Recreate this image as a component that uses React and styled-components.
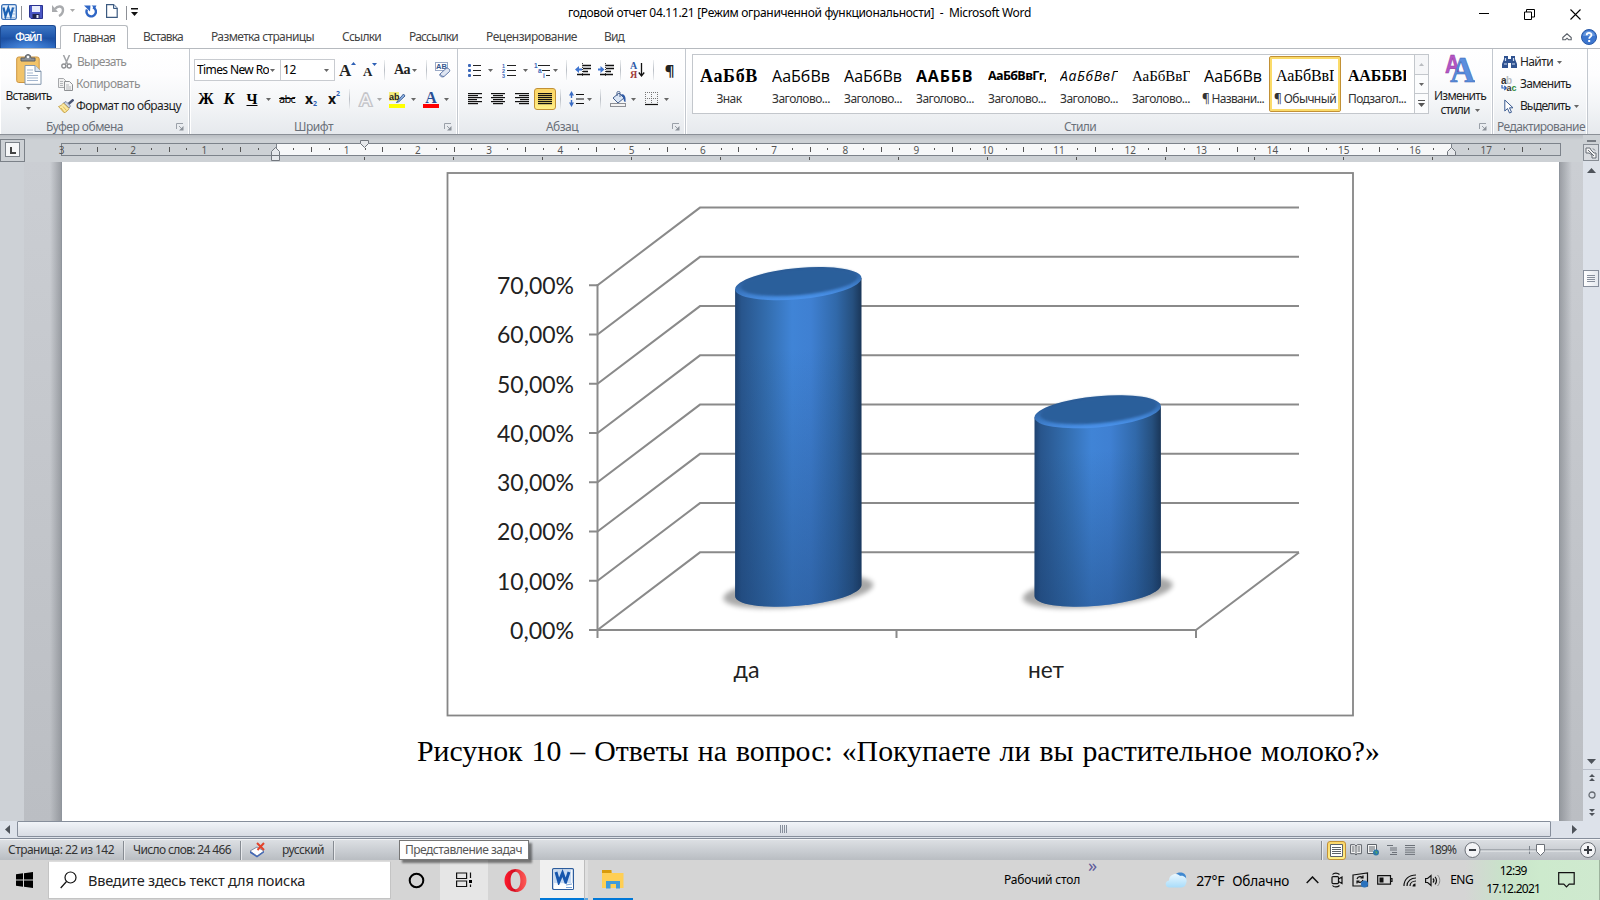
import React, { useLayoutEffect, useRef, useState } from "react";
import styled, { createGlobalStyle, css } from "styled-components";

const UI = `"Noto Sans", "Open Sans", sans-serif`;

const Global = createGlobalStyle`
  *, *::before, *::after { box-sizing: border-box; }
  html, body { margin: 0; padding: 0; overflow: hidden; }
  body { font: 12px/16px ${UI}; color: #1e1e1e; background: #fff; }
  svg { display: block; flex: none; }
`;

/* Text that adjusts its tracking (or its word gaps) to fill a given width. */
const FitBox = styled.span`
  display: inline-block;
  flex: none;
  white-space: pre;
  width: ${(p) => p.$w}px;
  font-size: ${(p) => p.$size || 12}px;
  font-family: ${(p) => p.$font || UI};
  font-weight: ${(p) => p.$weight || 400};
  font-style: ${(p) => (p.$italic ? "italic" : "normal")};
  color: ${(p) => p.$color || "inherit"};
  overflow: ${(p) => (p.$clip ? "hidden" : "visible")};
`;

function Fit({ w, children, words, clip, ...rest }) {
  const ref = useRef(null);
  const [gap, setGap] = useState(0);
  useLayoutEffect(() => {
    const natural = ref.current.getBoundingClientRect().width;
    const text = String(children);
    const slots = words ? text.split(" ").length - 1 : text.length;
    if (slots > 0 && natural > 0) setGap((w - natural) / slots);
  }, [w, children, words]);
  return (
    <FitBox $w={w} $clip={clip} {...rest}>
      <span ref={ref} style={words ? { wordSpacing: gap } : { letterSpacing: gap }}>
        {children}
      </span>
    </FitBox>
  );
}

/* ---------- frame ---------- */
const Window = styled.div`
  width: 1600px;
  height: 900px;
  display: flex;
  flex-direction: column;
  background: #fff;
  overflow: hidden;
`;

const Slot = styled.div`
  flex: none;
  width: ${(p) => p.$w}px;
  margin-left: ${(p) => p.$ml || 0}px;
  margin-top: ${(p) => p.$mt || 0}px;
  display: flex;
  align-items: center;
  justify-content: ${(p) => (p.$start ? "flex-start" : "center")};
`;

/* ---------- title bar ---------- */
const TitleBar = styled.div`
  height: 25px;
  flex: none;
  display: flex;
  align-items: center;
  padding-left: 1px;
`;
const TitleSep = styled.div`
  width: 1px;
  height: 14px;
  background: #8d9096;
  margin-left: ${(p) => p.$ml}px;
`;
const Title = styled.div`
  margin: 1px 0 0 430px;
  color: #000;
`;
const Caption = styled.div`
  display: flex;
  margin-left: 448px;
  margin-top: 3px;
  gap: 35px;
`;

/* ---------- tabs ---------- */
const Tabs = styled.div`
  height: 24px;
  flex: none;
  display: flex;
  border-bottom: 1px solid #b6babf;
  color: #444;
`;
const FileTab = styled.div`
  width: 56px;
  height: 23px;
  display: flex;
  align-items: center;
  justify-content: center;
  color: #fff;
  border: 1px solid #1c4a93;
  border-bottom: 0;
  border-radius: 3px 3px 0 0;
  background: radial-gradient(ellipse 30px 12px at 50% 100%, #4a8be0, rgba(74, 139, 224, 0)),
    linear-gradient(#3d76c4, #1f57ab 50%, #1c50a3 55%, #2a66bd);
`;
const ActiveTab = styled.div`
  width: 68px;
  height: 24px;
  margin-left: 4px;
  padding-left: 12px;
  display: flex;
  align-items: center;
  border: 1px solid #b6babf;
  border-bottom: 0;
  border-radius: 3px 3px 0 0;
  background: #fff;
`;
const Tab = styled.div`
  height: 24px;
  display: flex;
  align-items: center;
  margin-left: ${(p) => p.$ml}px;
`;
const TabsRight = styled.div`
  display: flex;
  align-items: center;
  margin-left: auto;
  gap: 9px;
  padding-right: 3px;
`;

/* ---------- ribbon ---------- */
const Ribbon = styled.div`
  height: 86px;
  flex: none;
  display: flex;
  background: linear-gradient(#fff 0, #fdfdfe 30%, #f3f5f7 65%, #e6e9ed 100%);
  border-bottom: 1px solid #8b9097;
`;
const Group = styled.div`
  width: ${(p) => p.$w}px;
  flex: none;
  display: flex;
  flex-direction: column;
  border-right: 1px solid #c3c8cf;
  box-shadow: inset -1px 0 #fff, inset 1px 0 #fff;
`;
const GroupBody = styled.div`
  height: 68px;
  display: flex;
  flex-direction: ${(p) => (p.$col ? "column" : "row")};
`;
const GroupFoot = styled.div`
  height: 17px;
  padding: 2px 0 0 ${(p) => p.$pl}px;
  display: flex;
  align-items: center;
  color: #6a7079;
`;
const LauncherBox = styled.div`
  margin-left: auto;
  margin-right: 5px;
`;
const ToolRow = styled.div`
  display: flex;
  align-items: center;
  height: ${(p) => p.$h}px;
  margin-top: ${(p) => p.$mt || 0}px;
  padding-left: ${(p) => p.$pl || 0}px;
`;
const BigButton = styled.div`
  width: ${(p) => p.$w}px;
  padding-top: 5px;
  display: flex;
  flex-direction: column;
  align-items: center;
  line-height: 14px;
`;
const Stack = styled.div`
  display: flex;
  flex-direction: column;
  padding-top: 2px;
  margin-left: ${(p) => p.$ml}px;
`;
const Command = styled.div`
  height: 22px;
  display: flex;
  align-items: center;
  gap: ${(p) => p.$gap || 3}px;
  color: ${(p) => (p.$off ? "#8d8d8d" : "#1e1e1e")};
`;
const Combo = styled.div`
  width: ${(p) => p.$w}px;
  height: 22px;
  flex: none;
  display: flex;
  align-items: center;
  justify-content: space-between;
  border: 1px solid #c8cbd0;
  margin-right: -1px;
  padding: 0 5px 0 2px;
  background: #fff;
  color: #000;
`;
const Sep = styled.div`
  width: 1px;
  height: 20px;
  flex: none;
  margin-left: ${(p) => p.$ml}px;
  background: linear-gradient(#eef0f2, #b9bec5, #eef0f2);
`;
const Glyph = styled.span`
  font-family: ${(p) => (p.$sans ? UI : `"Liberation Serif", serif`)};
  font-size: ${(p) => p.$size || 16}px;
  font-weight: ${(p) => (p.$light ? 400 : 700)};
  font-style: ${(p) => (p.$italic ? "italic" : "normal")};
  text-decoration: ${(p) => p.$deco || "none"};
  line-height: 18px;
  color: ${(p) => p.$color || "#222"};
  letter-spacing: ${(p) => p.$ls || 0}px;
`;
const Sub = styled.span`
  font: 700 7px/8px ${UI};
  color: #2d5fb5;
  align-self: ${(p) => (p.$up ? "flex-start" : "flex-end")};
`;
const Pressed = styled.div`
  width: 22px;
  height: 22px;
  flex: none;
  margin-left: ${(p) => p.$ml}px;
  display: flex;
  align-items: center;
  justify-content: center;
  border: 1px solid #c29136;
  border-radius: 3px;
  background: linear-gradient(#fbd669, #fcdd6c 50%, #fff08a);
`;

/* ---------- style gallery ---------- */
const Gallery = styled.div`
  width: 737px;
  height: 60px;
  margin: 5px 0 0 6px;
  flex: none;
  display: flex;
  border: 1px solid #c3c7cc;
  background: #fff;
`;
const StyleCell = styled.div`
  width: 72px;
  height: 56px;
  margin-top: 1px;
  flex: none;
  display: flex;
  flex-direction: column;
  align-items: center;
  padding-top: 9px;
  color: #333;
  ${(p) =>
    p.$on &&
    css`
      border: 1px solid #c29136;
      border-radius: 2px;
      box-shadow: inset 0 0 0 2px #fbdb69;
      padding-top: 8px;
    `}
`;
const Preview = styled.div`
  height: 22px;
  margin-bottom: 4px;
  line-height: 22px;
  width: 58px;
  flex: none;
  overflow: hidden;
  color: #000;
`;
const GalleryScroll = styled.div`
  width: 14px;
  margin-left: auto;
  display: flex;
  flex-direction: column;
`;
const ScrollCell = styled.div`
  flex: 1;
  display: flex;
  align-items: center;
  justify-content: center;
  border-left: 1px solid #c3c7cc;
  border-bottom: ${(p) => (p.$last ? 0 : 1)}px solid #c3c7cc;
  background: ${(p) => (p.$off ? "#f5f6f8" : "#fbfcfd")};
`;

/* ---------- document area ---------- */
const Work = styled.div`
  height: 686px;
  flex: none;
  display: flex;
`;
const WorkMain = styled.div`
  width: 1583px;
  display: flex;
  flex-direction: column;
`;
const RulerBar = styled.div`
  height: 27px;
  flex: none;
  background: linear-gradient(#b9bdc2 0, #cdd1d5 5px, #cdd1d5);
`;
const Canvas = styled.div`
  height: 659px;
  display: flex;
`;
const LeftEdge = styled.div`
  width: 24px;
  background: #cdd1d6;
`;
const Backdrop = styled.div`
  width: ${(p) => p.$w}px;
  background: ${(p) =>
      p.$left
        ? "linear-gradient(90deg, rgba(130,134,140,0) 26px, rgba(130,134,140,.65) 100%)"
        : "linear-gradient(270deg, rgba(130,134,140,0) 11px, rgba(130,134,140,.65) 100%)"},
    linear-gradient(#cbced3, #bbbec3);
`;
const Page = styled.div`
  width: 1499px;
  background: #fff;
  border-left: 1px solid #8f959d;
  border-right: 1px solid #8f959d;
  padding: 10px 0 0 355px;
`;
const ChartFrame = styled.div`
  width: 908px;
  margin-left: 29px;
`;
const FigureCaption = styled.div`
  margin-top: 16px;
  line-height: 36px;
  color: #000;
`;

const VScroll = styled.div`
  width: 17px;
  background: #dde2ea;
  display: flex;
  flex-direction: column;
  align-items: flex-start;
`;
const SplitBar = styled.div`
  width: 17px;
  height: 9px;
  background: #cdd1d5;
  padding: 5px 4px 0;
  flex: none;
  &::after {
    content: "";
    display: block;
    height: 2px;
    background: #777c83;
  }
`;
const RulerToggle = styled.div`
  width: 16px;
  height: 17px;
  flex: none;
  border: 1px solid #868c94;
  background: #d9dce0;
  display: flex;
  align-items: center;
  justify-content: center;
`;
const VThumb = styled.div`
  width: 16px;
  height: 17px;
  flex: none;
  margin-top: 97px;
  border: 1px solid #868e9b;
  background: linear-gradient(90deg, #fff, #e4e8ee);
  display: flex;
  align-items: center;
  justify-content: center;
`;
const NavBlock = styled.div`
  width: 17px;
  margin-top: 5px;
  padding-top: 4px;
  border-top: 1px solid #b8bec9;
  display: flex;
  flex-direction: column;
  align-items: center;
  gap: 10px;
`;

const HScroll = styled.div`
  height: 18px;
  flex: none;
  display: flex;
  align-items: flex-start;
  background: #dde2ea;
  border-bottom: 1px solid #868e9b;
`;
const HArrow = styled.div`
  width: ${(p) => p.$w}px;
  height: 17px;
  display: flex;
  align-items: center;
  justify-content: ${(p) => (p.$end ? "flex-end" : "flex-start")};
  padding: ${(p) => (p.$end ? "0 23px 0 0" : "0 0 0 5px")};
`;
const HThumb = styled.div`
  width: 1534px;
  height: 16px;
  flex: none;
  display: flex;
  align-items: center;
  justify-content: center;
  border: 1px solid #868e9b;
  border-radius: 1px;
  background: linear-gradient(#f1f4f8, #d8dce3);
`;

/* ---------- status bar ---------- */
const StatusBar = styled.div`
  height: 21px;
  flex: none;
  display: flex;
  align-items: center;
  border-top: 1px solid #f2f3f5;
  background: linear-gradient(#dcdfe3, #c7cbd0 60%, #b9bdc2);
  color: #333;
  padding-left: 8px;
`;
const StatusSep = styled.div`
  width: 2px;
  height: 19px;
  flex: none;
  margin-left: ${(p) => p.$ml}px;
  background: #868b92;
  border-right: 1px solid #e8eaed;
`;
const ViewOn = styled.div`
  width: 19px;
  height: 19px;
  margin-left: 4px;
  flex: none;
  border: 1px solid #c29136;
  border-radius: 3px;
  background: linear-gradient(#fbd669, #fff08a);
  display: flex;
  align-items: center;
  justify-content: center;
`;
const Tooltip = styled.div`
  position: absolute;
  left: 399px;
  top: 840px;
  width: 130px;
  height: 20px;
  padding: 1px 0 0 5px;
  border: 1px solid #767676;
  background: #fff;
  color: #575757;
  box-shadow: 3px 3px 2px rgba(0, 0, 0, 0.45);
`;

/* ---------- taskbar ---------- */
const Taskbar = styled.div`
  height: 40px;
  flex: none;
  display: flex;
  align-items: stretch;
  background: linear-gradient(90deg, #d5d5d5 0, #d5d5d5 1465px, #c8e3c9 1505px, #cdeacd 1540px, #cfe9cf 100%);
  color: #000;
`;
const TaskTile = styled.div`
  width: ${(p) => p.$w}px;
  margin-left: ${(p) => p.$ml || 0}px;
  padding-left: ${(p) => p.$pl || 0}px;
  flex: none;
  display: flex;
  align-items: center;
  justify-content: center;
  background: ${(p) => p.$bg || "transparent"};
  border-bottom: ${(p) => (p.$open ? "2px solid #0078d7" : "0")};
`;
const TileEdge = styled.div`
  width: 4px;
  flex: none;
  background: #dfdfdf;
  border-left: 1px solid #bdbdbd;
  border-bottom: 2px solid #5aa5e0;
`;
const Search = styled.div`
  width: 343px;
  height: 38px;
  margin: 1px 0 0;
  flex: none;
  display: flex;
  align-items: center;
  padding-left: 11px;
  gap: 11px;
  border: 1px solid #c4c4c4;
  border-top-color: #ddd;
  background: #fff;
  color: #222;
`;
const Toolbar = styled.div`
  display: flex;
  margin-left: 371px;
  align-items: center;
`;
const MoreMark = styled.span`
  align-self: flex-start;
  margin: -4px 0 0 8px;
  font: 18px/18px ${UI};
  color: #5d5a9a;
`;
const Tray = styled.div`
  display: flex;
  align-items: center;
`;
const Clock = styled.div`
  width: 60px;
  margin-left: 10px;
  display: flex;
  flex-direction: column;
  align-items: center;
  line-height: 18px;
`;
const PeekLine = styled.div`
  width: 1px;
  margin-left: 24px;
  background: #9db39d;
`;

/* ---------- icons ---------- */
const Down = ({ c = "#666", w = 7 }) => (
  <svg width={w} height={(w + 1) / 2} viewBox="0 0 8 4" preserveAspectRatio="none"><path d="M0 0h8L4 4z" fill={c} /></svg>
);
const Up = ({ c = "#666", w = 7 }) => (
  <svg width={w} height={(w + 1) / 2} viewBox="0 0 8 4" preserveAspectRatio="none"><path d="M0 4h8L4 0z" fill={c} /></svg>
);
const Launcher = () => (
  <LauncherBox>
    <svg width="8" height="8" viewBox="0 0 8 8">
      <path d="M.5 6V.5H7M3 3l3 3" stroke="#9aa0a8" fill="none" />
      <path d="M7.500 3v4.500H3z" fill="#8b9199" />
    </svg>
  </LauncherBox>
);
const WordLogo = () => (
  <svg width="16" height="16" viewBox="0 0 16 16">
    <rect x=".7" y=".7" width="14.600" height="14.600" rx="1.500" fill="#eaf2fb" stroke="#3a6fb5" strokeWidth="1.300" />
    <path d="M12 4h2.500M12 7h2.500M12 10h2.500M3 13.500h11" stroke="#9dbbe0" />
    <path d="M2.500 3.500l2 8.500 2.800-8L9.800 12l2.200-8.500" fill="none" stroke="#1d62b4" strokeWidth="2.200" />
  </svg>
);
const Save = () => (
  <svg width="14" height="14" viewBox="0 0 14 14">
    <path d="M.5.5h13v13H2L.5 12z" fill="#4a57c4" stroke="#2a3390" />
    <rect x="3" y="1" width="8" height="6" fill="#e9edfb" />
    <rect x="3.500" y="9" width="7" height="4.500" fill="#20264f" />
    <rect x="7.500" y="10" width="2" height="3" fill="#e9edfb" />
  </svg>
);
const Undo = () => (
  <svg width="13" height="13" viewBox="0 0 13 13">
    <path d="M3 5c3-4 8-3 8 1 0 3-2 5-4 6" fill="none" stroke="#a9abae" strokeWidth="2.400" />
    <path d="M0 1v7h6z" fill="#a9abae" />
  </svg>
);
const Redo = () => (
  <svg width="13" height="13" viewBox="0 0 13 13">
    <path d="M3 4.500A4.700 4.700 0 1 0 9 2.300" fill="none" stroke="#2f66c5" strokeWidth="2.400" />
    <path d="M0 .5h6.500L6 6.500z" fill="#2f66c5" />
    <path d="M7.500 .5h5L11 3.500z" fill="#2f66c5" />
  </svg>
);
const NewDoc = () => (
  <svg width="12" height="14" viewBox="0 0 12 14">
    <path d="M.6.6h7l3.600 3.600v9.200H.6z" fill="#fff" stroke="#3c5a80" strokeWidth="1.200" />
    <path d="M7.500.5v4h4" fill="#c9d6e6" stroke="#3c5a80" />
  </svg>
);
const Customize = () => (
  <svg width="7" height="8" viewBox="0 0 7 8"><path d="M0 0h7v1.500H0zM0 4h7L3.500 8z" fill="#111" /></svg>
);
const WinMin = () => <svg width="10" height="10"><path d="M0 4.500h10" stroke="#000" /></svg>;
const WinRestore = () => (
  <svg width="11" height="11"><path d="M.5 3h7v7.500h-7zM2.500 3V.5h8V8H7.500" fill="none" stroke="#000" /></svg>
);
const WinClose = () => <svg width="11" height="11"><path d="M.5.5l10 10M10.500.5l-10 10" stroke="#000" strokeWidth="1.100" /></svg>;
const RibbonMin = () => (
  <svg width="10" height="8" viewBox="0 0 10 8">
    <path d="M.8 4.500L5 .8l4.200 3.700v2.200H6.500L5 5.200 3.500 6.700H.8z" fill="#fff" stroke="#5a6068" strokeWidth="1.100" />
  </svg>
);
const Help = () => (
  <svg width="16" height="16" viewBox="0 0 16 16">
    <circle cx="8" cy="8" r="7.500" fill="#3c76cf" stroke="#2a5aa8" />
    <path d="M2 7a6 5 0 0 1 12 0z" fill="#7fabe6" opacity=".6" />
    <path d="M5.700 6.300c0-3.200 4.800-3 4.800-.3 0 1.900-2.300 1.700-2.300 3.700" fill="none" stroke="#fff" strokeWidth="1.800" />
    <rect x="7.200" y="11" width="2" height="2" fill="#fff" />
  </svg>
);
const Paste = () => (
  <svg width="26" height="31" viewBox="0 0 26 31">
    <rect x=".7" y="3" width="22.500" height="25.500" rx="2" fill="#f2c369" stroke="#cd9540" />
    <path d="M5 7V4h4a3 3.500 0 0 1 6 0h4v3z" fill="#8b9096" stroke="#5c6066" />
    <circle cx="12" cy="3" r="1.200" fill="#fff" />
    <path d="M9 11.500h10l6 6v12.800H9z" fill="#fff" stroke="#8296ad" />
    <path d="M19 11.500v6h6" fill="#dce6f2" stroke="#8296ad" />
    <path d="M11 16h6M11 19h6M11 21.500h11M11 24h11M11 26.500h11" stroke="#a5b7cf" />
  </svg>
);
const Cut = () => (
  <svg width="11" height="14" viewBox="0 0 11 14">
    <path d="M2.500 0l4 9M8.500 0l-4 9" stroke="#a0a2a5" strokeWidth="1.500" />
    <circle cx="2.800" cy="11" r="2" fill="none" stroke="#8e9093" strokeWidth="1.400" />
    <circle cx="8.200" cy="11" r="2" fill="none" stroke="#8e9093" strokeWidth="1.400" />
  </svg>
);
const Copy = () => (
  <svg width="15" height="13" viewBox="0 0 15 13">
    <path d="M.5.5h5l2 2v7h-7z" fill="#f0f0f0" stroke="#a6a8ab" />
    <path d="M6.500 3.500h5l3 3v6h-8z" fill="#f6f6f6" stroke="#8e9093" />
    <path d="M2 3.500h3M2 5.500h3M2 7.500h3M8 7h3M8 9h5M8 11h5" stroke="#b5b7ba" />
  </svg>
);
const Brush = () => (
  <svg width="16" height="14" viewBox="0 0 16 14">
    <path d="M15.500.5L10.500 5" stroke="#4b5674" strokeWidth="2.400" />
    <path d="M8 2.500l4.500 4.500-1.500 2-5.500-5z" fill="#c8d2e4" stroke="#6a7592" strokeWidth=".8" />
    <path d="M5.500 4l5.500 5.500c-1 2-3 4-5 4.200L.5 7.500C2.500 7 4 6 5.500 4z" fill="#fbe9a0" stroke="#c09a3c" strokeWidth=".8" />
    <path d="M3 9l3 4M5 7.500l3.500 4" stroke="#dbb454" />
  </svg>
);
const MarkBox = styled.div`
  align-self: flex-start;
`;
const GrowMark = ({ up }) => (
  <MarkBox>
    <svg width="5" height="3" viewBox="0 0 5 3">
      <path d={up ? "M0 3h5L2.500 0z" : "M0 0h5L2.500 3z"} fill="#2d5fb5" />
    </svg>
  </MarkBox>
);
const ClearFmt = () => (
  <svg width="17" height="16" viewBox="0 0 17 16">
    <rect x=".5" y=".5" width="12" height="8" fill="#fff" stroke="#9aa9c6" />
    <text x="1" y="7.300" fontFamily="Liberation Sans" fontSize="7.500" fontWeight="700" fill="#35588f">AB</text>
    <path d="M5 12l6-5.500c2-1 4.500 1 3.500 3L9 14.500c-2 1.200-5-.5-4-2.500z" fill="#dfe6f3" stroke="#5f78a8" />
    <path d="M5 12c.5 1 2 2.500 4 2.500" stroke="#5f78a8" fill="none" />
  </svg>
);
const OutlineA = () => (
  <svg width="16" height="15" viewBox="0 0 16 15">
    <text x="2" y="13.500" fontFamily="Liberation Sans" fontSize="17" fontWeight="400" fill="#fff" stroke="#c4c5c9" strokeWidth="3">A</text>
    <text x="2" y="13.500" fontFamily="Liberation Sans" fontSize="17" fontWeight="400" fill="#f4f4f6">A</text>
  </svg>
);
const Marker = () => (
  <svg width="17" height="16" viewBox="0 0 17 16">
    <rect x="0" y="0" width="10" height="9" fill="#f4ee7c" />
    <text x="0" y="7.500" fontFamily="Liberation Sans" fontSize="9" fontWeight="700" fill="#222">ab</text>
    <path d="M14.500 2L9 8.500l-1.500 2 2.300-.7L16 4z" fill="#8fb1e3" stroke="#34588f" strokeWidth=".9" />
    <rect y="12" width="16" height="4" fill="#ff0" />
  </svg>
);
const FontColor = () => (
  <svg width="16" height="16" viewBox="0 0 16 16">
    <text x="2.200" y="10.500" fontFamily="Liberation Serif" fontSize="16" fontWeight="700" fill="#2a4f96">A</text>
    <rect y="12" width="16" height="4" fill="#f00" />
  </svg>
);
const Bullets = () => (
  <svg width="14" height="14" viewBox="0 0 14 14">
    <path d="M5 2.500h8M5 7.500h8M5 12.500h8" stroke="#222" />
    {[2, 7, 12].map((y) => <rect key={y} x="0" y={y - 1} width="3" height="3" rx="1" fill="#3a66b8" />)}
  </svg>
);
const Numbers = () => (
  <svg width="15" height="15" viewBox="0 0 15 15">
    <path d="M5 2.500h9M5 7.500h9M5 12.500h9" stroke="#222" />
    {[1, 2, 3].map((n) => <text key={n} x="0" y={n * 5} fontFamily="Liberation Sans" fontSize="5.500" fontWeight="700" fill="#3a66b8">{n}</text>)}
  </svg>
);
const Multi = () => (
  <svg width="17" height="15" viewBox="0 0 17 15">
    <path d="M4 2.500h12M8 7.500h8M12 12.500h4" stroke="#222" />
    <g fontFamily="Liberation Sans" fontSize="6.500" fontWeight="700" fill="#3a66b8">
      <text x="0" y="5">1</text><text x="4" y="10">a</text><text x="9" y="15">i</text>
    </g>
  </svg>
);
const Indent = ({ out }) => (
  <svg width="16" height="14" viewBox="0 0 16 14">
    <path d="M7 2.500h9M8 5.500h8M8 8.500h5M2 11.500h13" stroke="#111" strokeWidth="1.600" />
    <path d="M7.500 0v14" stroke="#444" strokeDasharray="1 1" />
    <path d={out ? "M0 6.500l4-3.500v2.500h3v2H4V10z" : "M6.500 6.500L2.500 3v2.500H0v2h2.500V10z"} fill="#3f75d0" />
  </svg>
);
const Sort = () => (
  <svg width="15" height="16" viewBox="0 0 15 16">
    <g fontFamily="Liberation Serif" fontSize="10" fontWeight="700">
      <text x="0" y="7" fill="#2f5ba8">А</text><text x="0" y="15.500" fill="#a03c3c">Я</text>
    </g>
    <path d="M11.500 1v12M8.800 10.500l2.700 3.500 2.700-3.500" fill="none" stroke="#111" strokeWidth="1.300" />
  </svg>
);
const Lines = ({ rows, c = "#111", w = 14 }) => (
  <svg width={w} height="12" viewBox={`0 0 ${w} 12`}>
    {rows.map(([x, len], i) => <rect key={i} x={x} y={i * 2} width={len} height="1.200" fill={c} />)}
  </svg>
);
const LineSpacing = () => (
  <svg width="16" height="16" viewBox="0 0 16 16">
    <path d="M7 3.500h8M7 8h8M7 12.500h8" stroke="#111" strokeWidth="1.200" />
    <path d="M0 4.500L2.500 0 5 4.500H3.200V7H1.800V4.500zM0 11.500L2.500 16 5 11.500H3.200V9H1.800v2.500z" fill="#3a6cc4" />
  </svg>
);
const Bucket = () => (
  <svg width="17" height="16" viewBox="0 0 17 16">
    <path d="M3 7l6-5 5 5-6 5z" fill="#dbe6f5" stroke="#46618f" />
    <path d="M7 5V1.500c0-1.500 3-1.500 3 0V6" fill="none" stroke="#46618f" />
    <path d="M11 3c4 0 5 3 4.500 8-1.500 0-2-2-2-4z" fill="#2f5ba8" />
    <rect x=".5" y="12.500" width="15" height="3" fill="#f2f2f2" stroke="#8d9096" />
  </svg>
);
const Borders = () => (
  <svg width="14" height="14" viewBox="0 0 14 14">
    <path d="M0 .5h13M0 6.500h13M.5 0v12M6.500 0v12M12.500 0v12" stroke="#777" strokeDasharray="1 1" />
    <path d="M0 12.500h13" stroke="#111" strokeWidth="1.200" />
  </svg>
);
const ChangeStyles = () => (
  <svg width="30" height="30" viewBox="0 0 30 30">
    <text x="0" y="19" fontFamily="Liberation Sans" fontSize="25" fontWeight="700" fill="#b455c4" stroke="#8c3a9c" strokeWidth=".5" textLength="15" lengthAdjust="spacingAndGlyphs">A</text>
    <text x="5" y="28" fontFamily="Liberation Serif" fontSize="35" fontWeight="700" fill="#5b8fde" stroke="#3564b0" strokeWidth=".5" textLength="25" lengthAdjust="spacingAndGlyphs">A</text>
  </svg>
);
const Binoculars = () => (
  <svg width="15" height="14" viewBox="0 0 15 14">
    <path d="M2 4V1h4v3h3V1h4v3l2 5v4H9V8H6v5H0V9z" fill="#2f5290" />
    <path d="M2 9h3M10 9h3M3.500 3v3M11.500 3v3" stroke="#cddcf3" strokeWidth="1.200" />
  </svg>
);
const Replace = () => (
  <svg width="16" height="16" viewBox="0 0 16 16">
    <g fontFamily="Liberation Sans" fontSize="10" fontWeight="700">
      <text x="0" y="7.500" fill="#333">a</text><text x="5" y="7.500" fill="#b9bcc0">b</text>
      <text x="5.500" y="14.500" fill="#333" fontSize="9">a</text><text x="10.500" y="14.500" fill="#2f8a3a" fontSize="9">c</text>
    </g>
    <path d="M1 9v3h4M3.300 10l2 2-2 2" fill="none" stroke="#2d5fb5" strokeWidth="1.200" />
  </svg>
);
const Pointer = () => (
  <svg width="10" height="15" viewBox="0 0 10 15">
    <path d="M.8 1v11l2.700-2.500L5.500 14l2-.8-2-4.400H9z" fill="#fff" stroke="#3a5a90" />
  </svg>
);
const SpellBook = () => (
  <svg width="17" height="16" viewBox="0 0 17 16">
    <path d="M1 9l7-4 7 4-7 5z" fill="#fff" stroke="#7d8aa5" />
    <path d="M1 9v2l7 4.500 7-5V9l-7 5z" fill="#3f66b8" />
    <path d="M8 1l7 7M15 1L8.500 8" stroke="#e2442c" strokeWidth="2" />
  </svg>
);
const Cloud = () => (
  <svg width="23" height="17" viewBox="0 0 23 17">
    <defs><linearGradient id="cl" x1="0" y1="0" x2="0" y2="1"><stop offset="0" stopColor="#e9f7ff" /><stop offset="1" stopColor="#a8dcfa" /></linearGradient></defs>
    <path d="M11 2c4-3 11-1 10 5z" fill="#3f88d0" />
    <path d="M4.500 15.500C-.5 15.500-.5 9 4 8.500 4 2 12 0 15 4c5-1 8 3.500 6 7.500-.7 3-3 4-5 4z" fill="url(#cl)" />
  </svg>
);
const stroke = { fill: "none", stroke: "#111", strokeWidth: 1.2 };
const Meet = () => (
  <svg width="12" height="16" viewBox="0 0 12 16"><rect x="1" y="4.600" width="6.500" height="7" rx="1" {...stroke} /><path d="M7.500 7L11 5v6.500l-3.500-2M1.500 2.500C3 .6 6.500.6 8.500 2.500M1.500 13.500c1.500 1.900 5 1.900 7 0" {...stroke} /></svg>
);
const SyncIcon = () => (
  <svg width="17" height="16" viewBox="0 0 17 16">
    <path d="M1 3l14.500-2v13H1z" {...stroke} />
    <path d="M5 7c1-3 5-3 6-1M11 3.500V6H8.500M11 8c-1 3-5 3-6 1M5 11.500V9h2.500" {...stroke} />
    <circle cx="12.500" cy="12" r="3.600" fill="#2a72bd" />
  </svg>
);
const Battery = () => (
  <svg width="16" height="10" viewBox="0 0 16 10"><path d="M.7.700h12.800v8.500H.7zM13.500 3.500h1.500v3h-1.500" {...stroke} /><rect x="2.500" y="2.500" width="4" height="5" fill="#111" /></svg>
);
const Wifi = () => (
  <svg width="14" height="13" viewBox="0 0 14 13">
    <path d="M1 12C1 5 6 1 13 1M4 12c0-5 4-8 9-8M7 12c0-3 2.500-5 6-5" {...stroke} /><path d="M9.500 12.500c0-2 1.500-3 3-3v3z" fill="#111" />
  </svg>
);
const Volume = () => (
  <svg width="16" height="13" viewBox="0 0 16 13">
    <path d="M.6 4.500h2L6 1.500v10l-3.400-3h-2zM8 4.500c1 1.200 1 3 0 4M10 2.800c2 2 2 5.500 0 7.500" {...stroke} /><path d="M12.500 1c3 3 3 8 0 11" fill="none" stroke="#888" />
  </svg>
);
const Opera = () => (
  <svg width="23" height="23" viewBox="0 0 22 23">
    <defs><linearGradient id="op" x1="0" x2="1"><stop offset="0" stopColor="#ff1b2d" /><stop offset=".45" stopColor="#d10c20" /><stop offset=".55" stopColor="#e8323c" /><stop offset="1" stopColor="#ff5a55" /></linearGradient></defs>
    <path fillRule="evenodd" d="M11 0a11 11.500 0 1 0 0 23a11 11.500 0 1 0 0-23zM11 2.800c3 0 4.900 3.700 4.900 8.700S14 20.200 11 20.200s-4.900-3.700-4.900-8.700S8 2.800 11 2.800z" fill="url(#op)" />
  </svg>
);
const WordDoc = () => (
  <svg width="22" height="22" viewBox="0 0 22 22">
    <rect x=".6" y=".6" width="20.800" height="20.800" rx="1" fill="#f4f8fd" stroke="#2c5c9c" strokeWidth="1.200" />
    <rect x="2" y="2" width="17" height="13" fill="#c7daf2" />
    <path d="M4 4l2.800 10L10.500 5l3.200 9L17 4" fill="none" stroke="#1656ad" strokeWidth="2.900" />
    <path d="M2 21v-4c5 1 9-2 13-1s4-1 6-1v6z" fill="#fff" />
    <path d="M14 17l6-1M14 19.500h6" stroke="#7ba4d6" />
  </svg>
);
const Folder = () => (
  <svg width="22" height="19" viewBox="0 0 22 19">
    <path d="M0 1h9l1 2h11.500v15H0z" fill="#ffcf55" /><path d="M0 0h9.500v3H0z" fill="#d99b0b" />
    <path d="M4 18.500V11h14v7.500h-4V14H8.500v4.500z" fill="#3f9bdc" />
  </svg>
);

/* ---------- ruler ---------- */
const CM = 71.22;
const ZERO = 275.5;
function Ruler() {
  const marks = [];
  for (let q = -12; q <= 72; q++) {
    const x = ZERO + (q * CM) / 4;
    if (x < 63 || x > 1556 || q === 0 || Math.abs(x - 1451) < 6) continue;
    if (q % 4 === 0) {
      marks.push(<text key={q} x={x} y="18.700" textAnchor="middle">{Math.abs(q / 4)}</text>);
    } else if (Math.abs(q % 2) === 0) marks.push(<rect key={q} x={Math.round(x)} y="12" width="1" height="5" />);
    else marks.push(<rect key={q} x={Math.round(x)} y="13" width="1" height="2" />);
  }
  const stops = [];
  for (let i = 1; i <= 13; i++) stops.push(<rect key={i} x={Math.round(275 + i * 89)} y="22" width="1" height="3" />);
  return (
    <svg width="1583" height="27" viewBox="0 0 1583 27">
      <rect x=".5" y="4.500" width="24" height="22" fill="#cdd1d5" stroke="#7b8188" />
      <rect x="5.500" y="7.500" width="14" height="14" fill="#f6f7f8" stroke="#7b8188" />
      <path d="M11 12v6h5" fill="none" stroke="#444" strokeWidth="2" />
      <rect x="276" y="8.500" width="1175" height="12" fill="#f7f8f9" />
      <rect x="61.500" y="8.500" width="1499" height="12" fill="none" stroke="#7d838b" />
      <path d="M276.500 8v13M1451.500 8v8" stroke="#7d838b" />
      <g fill="#555" fontFamily='"Noto Sans", sans-serif' fontSize="10">
        <text x="61.500" y="18.700" textAnchor="middle">3</text>
        {marks}
      </g>
      <g fill="#555">{stops}</g>
      <g fill="#e6e8eb" stroke="#72777e">
        <path d="M360.500 5.500h8v3l-4 4-4-4z" />
        <path d="M271.500 20.500v-4l4-4 4 4v4zM271.500 20.500h8v5h-8z" />
        <path d="M1447.500 20.500v-4l4-4 4 4v4z" />
      </g>
    </svg>
  );
}

/* ---------- chart ---------- */
function Cylinder({ cx, top }) {
  const r = 63.2, k = 15.300, base = 590.5;
  return (
    <g transform={`translate(${cx} 0) skewY(-5)`}>
      <ellipse cx="0" cy={base + 1} rx="75" ry="15.500" fill="#000" opacity=".34" filter="url(#soft)" />
      <path d={`M${-r} ${top}V${base}A${r} ${k} 0 0 0 ${r} ${base}V${top}Z`} fill="url(#side)" />
      <path d={`M${-r} ${top}V${base}A${r} ${k} 0 0 0 ${r} ${base}V${top}Z`} fill="url(#fall)" />
      <ellipse cx="0" cy={top} rx={r} ry={k + 0.300} fill="url(#rim)" />
      <ellipse cx="1" cy={top - 1.500} rx={r - 5} ry={k - 2.300} fill="#2b5f9b" filter="url(#edge)" />
    </g>
  );
}
function Chart() {
  const rows = [0, 1, 2, 3, 4, 5, 6, 7];
  return (
    <svg width="908" height="545" viewBox="446 172 908 545">
      <defs>
        <linearGradient id="side">
          <stop offset="0" stopColor="#1f426f" /><stop offset=".05" stopColor="#28558c" />
          <stop offset=".25" stopColor="#336dae" /><stop offset=".45" stopColor="#4084d6" />
          <stop offset=".6" stopColor="#3f80d2" /><stop offset=".8" stopColor="#3169aa" />
          <stop offset=".93" stopColor="#26507f" /><stop offset="1" stopColor="#1a3658" />
        </linearGradient>
        <linearGradient id="fall" x1="0" y1="0" x2="0" y2="1">
          <stop offset=".2" stopColor="#1a3f70" stopOpacity="0" /><stop offset="1" stopColor="#1a3f70" stopOpacity=".42" />
        </linearGradient>
        <linearGradient id="rim" x1="0" y1="0" x2="0" y2="1">
          <stop offset=".2" stopColor="#2a5a94" /><stop offset="1" stopColor="#4a92ea" />
        </linearGradient>
        <filter id="soft" x="-20%" y="-50%" width="140%" height="200%"><feGaussianBlur stdDeviation="2.500" /></filter>
        <filter id="edge" x="-10%" y="-20%" width="120%" height="140%"><feGaussianBlur stdDeviation="1.200" /></filter>
      </defs>
      <rect x="447.500" y="173" width="905.500" height="542.500" fill="#fff" stroke="#868686" strokeWidth="1.800" />
      <g fill="none" stroke="#8a8a8a" strokeWidth="2">
        {rows.map((i) => (
          <path key={i} d={`M589 ${285.3 + i * 49.25}H597.500L700 ${207.6 + i * 49.25}H1299`} />
        ))}
        <path d="M597.500 284V638M597 630H1196V638M896.500 630V638M1196 630L1299 552.500" />
      </g>
      <g fontFamily='Lato, "Open Sans", sans-serif' fontSize="23.200" fill="#222">
        {rows.map((i) => (
          <text key={i} x={i === 7 ? 510 : 497} y={294 + i * 49.25} textLength={i === 7 ? 64 : 77} lengthAdjust="spacingAndGlyphs">
            {`${i === 7 ? "0" : (7 - i) * 10},00%`}
          </text>
        ))}
        <text x="733.500" y="677.500" textLength="26" lengthAdjust="spacingAndGlyphs">да</text>
        <text x="1028" y="677.500" textLength="36" lengthAdjust="spacingAndGlyphs">нет</text>
      </g>
      <Cylinder cx={798.3} top={283.600} />
      <Cylinder cx={1097.7} top={411.800} />
    </svg>
  );
}

/* ---------- data ---------- */
const TABS = [
  ["Вставка", 40, 15], ["Разметка страницы", 103, 28], ["Ссылки", 39, 28],
  ["Рассылки", 49, 28], ["Рецензирование", 91, 28], ["Вид", 20, 27],
];
const SERIF = `"Liberation Serif", serif`;
const CAL = `"Open Sans", "Noto Sans", sans-serif`;
const STYLES = [
  ["АаБбВ", 58, "Знак", 25, { $font: SERIF, $size: 18, $weight: 700 }],
  ["АаБбВв", 58, "Заголово...", 58, { $font: CAL, $size: 16 }],
  ["АаБбВв", 58, "Заголово...", 58, { $font: CAL, $size: 16 }],
  ["ААББВГ", 67, "Заголово...", 58, { $font: CAL, $size: 16, $weight: 700 }],
  ["АаБбВвГг,", 59, "Заголово...", 58, { $font: CAL, $size: 12.5, $weight: 700 }],
  ["АаБбВвГ", 58, "Заголово...", 58, { $font: CAL, $size: 14, $italic: true }],
  ["АаБбВвГг", 65, "Заголово...", 58, { $font: SERIF, $size: 15 }],
  ["АаБбВв", 58, "¶ Названи...", 62, { $font: CAL, $size: 16 }],
  ["АаБбВвГ", 62, "¶ Обычный", 62, { $font: SERIF, $size: 16 }],
  ["ААББВГ", 64, "Подзагол...", 58, { $font: SERIF, $size: 16, $weight: 700 }],
];
const L = [[0, 14], [0, 10], [0, 14], [0, 9], [0, 14], [0, 10]];
const C = [[0, 14], [2, 10], [0, 14], [2, 10], [0, 14], [2, 10]];
const R = [[0, 14], [4, 10], [0, 14], [5, 9], [0, 14], [4, 10]];
const J = [[0, 14], [0, 14], [0, 14], [0, 14], [0, 14], [0, 14]];

export default function App() {
  return (
    <>
      <Global />
      <Window>
        <TitleBar>
          <Slot $w={16} $mt={-2}><WordLogo /></Slot>
          <TitleSep $ml={4} />
          <Slot $w={14} $ml={7} $mt={-2}><Save /></Slot>
          <Slot $w={13} $ml={9} $mt={-4}><Undo /></Slot>
          <Slot $w={5} $ml={5} $mt={-4}><Down w={5} c="#aaa" /></Slot>
          <Slot $w={13} $ml={9} $mt={-3}><Redo /></Slot>
          <Slot $w={12} $ml={9} $mt={-3}><NewDoc /></Slot>
          <TitleSep $ml={8} />
          <Slot $w={7} $ml={4} $mt={-1}><Customize /></Slot>
          <Title><Fit w={463}>годовой отчет 04.11.21 [Режим ограниченной функциональности]  -  Microsoft Word</Fit></Title>
          <Caption><WinMin /><WinRestore /><WinClose /></Caption>
        </TitleBar>

        <Tabs>
          <FileTab><Fit w={26} $weight={500}>Файл</Fit></FileTab>
          <ActiveTab><Fit w={42}>Главная</Fit></ActiveTab>
          {TABS.map(([name, w, ml]) => <Tab key={name} $ml={ml}><Fit w={w}>{name}</Fit></Tab>)}
          <TabsRight><RibbonMin /><Help /></TabsRight>
        </Tabs>

        <Ribbon>
          <Group $w={190}>
            <GroupBody>
              <BigButton $w={57}>
                <Paste />
                <Slot $w={46} $mt={4}><Fit w={46}>Вставить</Fit></Slot>
                <Slot $w={7} $mt={4}><Down w={5} /></Slot>
              </BigButton>
              <Stack $ml={1}>
                <Command $off $gap={5}><Slot $w={12} $ml={2}><Cut /></Slot><Fit w={49}>Вырезать</Fit></Command>
                <Command $off><Slot $w={15}><Copy /></Slot><Fit w={64}>Копировать</Fit></Command>
                <Command><Slot $w={15}><Brush /></Slot><Fit w={105}>Формат по образцу</Fit></Command>
              </Stack>
            </GroupBody>
            <GroupFoot $pl={46}><Fit w={77}>Буфер обмена</Fit><Launcher /></GroupFoot>
          </Group>

          <Group $w={268}>
            <GroupBody $col>
              <ToolRow $h={22} $mt={10} $pl={4}>
                <Combo $w={87}><Fit w={72} clip>Times New Rо</Fit><Down w={5} /></Combo>
                <Combo $w={55}><Fit w={13}>12</Fit><Down w={5} /></Combo>
                <Slot $w={18} $ml={5} $start $mt={1}><Glyph $size={17}>A</Glyph><GrowMark up /></Slot>
                <Slot $w={16} $ml={6} $start $mt={3}><Glyph $size={13}>A</Glyph><GrowMark /></Slot>
                <Sep $ml={5} />
                <Slot $w={16} $ml={9}><Glyph $size={14} $ls={-0.5}>Aa</Glyph></Slot>
                <Slot $w={5} $ml={2}><Down w={5} /></Slot>
                <Sep $ml={9} />
                <Slot $w={17} $ml={8}><ClearFmt /></Slot>
              </ToolRow>
              <ToolRow $h={22} $mt={7} $pl={8}>
                <Slot $w={16}><Glyph $color="#000">Ж</Glyph></Slot>
                <Slot $w={16} $ml={7}><Glyph $italic $color="#000">К</Glyph></Slot>
                <Slot $w={14} $ml={8}><Glyph $deco="underline" $size={15} $color="#000">Ч</Glyph></Slot>
                <Slot $w={5} $ml={7}><Down w={5} /></Slot>
                <Slot $w={18} $ml={7}><Glyph $sans $light $size={11} $ls={-0.8} $deco="line-through" $color="#000">abc</Glyph></Slot>
                <Slot $w={14} $ml={8}><Glyph $sans $size={14} $color="#111">x</Glyph><Sub>2</Sub></Slot>
                <Slot $w={14} $ml={9}><Glyph $sans $size={14} $color="#111">x</Glyph><Sub $up>2</Sub></Slot>
                <Sep $ml={8} />
                <Slot $w={16} $ml={8}><OutlineA /></Slot>
                <Slot $w={5} $ml={3}><Down w={5} c="#aaa" /></Slot>
                <Slot $w={17} $ml={7} $mt={2}><Marker /></Slot>
                <Slot $w={5} $ml={5}><Down w={5} /></Slot>
                <Slot $w={16} $ml={7} $mt={2}><FontColor /></Slot>
                <Slot $w={5} $ml={5}><Down w={5} /></Slot>
              </ToolRow>
            </GroupBody>
            <GroupFoot $pl={104}><Fit w={39}>Шрифт</Fit><Launcher /></GroupFoot>
          </Group>

          <Group $w={228}>
            <GroupBody $col>
              <ToolRow $h={22} $mt={10} $pl={10}>
                <Bullets />
                <Slot $w={5} $ml={6}><Down w={5} /></Slot>
                <Slot $w={15} $ml={9}><Numbers /></Slot>
                <Slot $w={5} $ml={6}><Down w={5} /></Slot>
                <Slot $w={17} $ml={6}><Multi /></Slot>
                <Slot $w={5} $ml={2}><Down w={5} /></Slot>
                <Sep $ml={8} />
                <Slot $w={16} $ml={8}><Indent out /></Slot>
                <Slot $w={16} $ml={7}><Indent /></Slot>
                <Sep $ml={6} />
                <Slot $w={15} $ml={9}><Sort /></Slot>
                <Sep $ml={8} />
                <Slot $w={11} $ml={10}><Glyph $size={15} $sans>¶</Glyph></Slot>
              </ToolRow>
              <ToolRow $h={22} $mt={7} $pl={10}>
                <Lines rows={L} />
                <Slot $w={14} $ml={9}><Lines rows={C} /></Slot>
                <Slot $w={14} $ml={10}><Lines rows={R} /></Slot>
                <Pressed $ml={5}><Lines rows={J} /></Pressed>
                <Sep $ml={4} />
                <Slot $w={16} $ml={8}><LineSpacing /></Slot>
                <Slot $w={5} $ml={2}><Down w={5} /></Slot>
                <Sep $ml={8} />
                <Slot $w={17} $ml={9}><Bucket /></Slot>
                <Slot $w={5} $ml={4}><Down w={5} /></Slot>
                <Slot $w={14} $ml={9}><Borders /></Slot>
                <Slot $w={5} $ml={5}><Down w={5} /></Slot>
              </ToolRow>
            </GroupBody>
            <GroupFoot $pl={88}><Fit w={32}>Абзац</Fit><Launcher /></GroupFoot>
          </Group>

          <Group $w={807}>
            <GroupBody>
              <Gallery>
                {STYLES.map(([sample, sw, name, nw, look], i) => (
                  <StyleCell key={i} $on={i === 8}>
                    <Preview><Fit w={sw} {...look}>{sample}</Fit></Preview>
                    <Fit w={nw}>{name}</Fit>
                  </StyleCell>
                ))}
                <GalleryScroll>
                  <ScrollCell $off><Up w={5} c="#b9bcc0" /></ScrollCell>
                  <ScrollCell><Down w={5} /></ScrollCell>
                  <ScrollCell $last>
                    <svg width="7" height="7" viewBox="0 0 7 7"><path d="M0 0h7v1H0zM0 3h7L3.500 7z" fill="#555" /></svg>
                  </ScrollCell>
                </GalleryScroll>
              </Gallery>
              <BigButton $w={62}>
                <ChangeStyles />
                <Slot $w={52} $mt={5}><Fit w={52}>Изменить</Fit></Slot>
                <Slot $w={46}><Fit w={29}>стили</Fit><Slot $w={5} $ml={5}><Down w={5} /></Slot></Slot>
              </BigButton>
            </GroupBody>
            <GroupFoot $pl={378}><Fit w={32}>Стили</Fit><Launcher /></GroupFoot>
          </Group>

          <Group $w={95}>
            <GroupBody>
              <Stack $ml={8}>
                <Command><Slot $w={16}><Binoculars /></Slot><Fit w={33}>Найти</Fit><Slot $w={5} $ml={1}><Down w={5} /></Slot></Command>
                <Command><Slot $w={16}><Replace /></Slot><Fit w={51}>Заменить</Fit></Command>
                <Command><Slot $w={16}><Pointer /></Slot><Fit w={50}>Выделить</Fit><Slot $w={5} $ml={1}><Down w={5} /></Slot></Command>
              </Stack>
            </GroupBody>
            <GroupFoot $pl={4}><Fit w={88}>Редактирование</Fit></GroupFoot>
          </Group>
        </Ribbon>

        <Work>
          <WorkMain>
            <RulerBar><Ruler /></RulerBar>
            <Canvas>
              <LeftEdge />
              <Backdrop $w={37} $left />
              <Page>
                <ChartFrame><Chart /></ChartFrame>
                <FigureCaption>
                  <Fit w={963} words $font={SERIF} $size={29.8}>Рисунок 10 – Ответы на вопрос: «Покупаете ли вы растительное молоко?»</Fit>
                </FigureCaption>
              </Page>
              <Backdrop $w={23} />
            </Canvas>
          </WorkMain>
          <VScroll>
            <SplitBar />
            <RulerToggle>
              <svg width="12" height="12" viewBox="0 0 12 12"><path d="M1 1h4l1 2 3 3h2v5H7V8L4 6H1z" fill="#f4f4f4" stroke="#666c74" /><path d="M3 3l6 6M8 1.500l2 2" stroke="#666c74" /></svg>
            </RulerToggle>
            <Slot $w={17} $mt={7}><Up w={9} c="#4e535a" /></Slot>
            <VThumb>
              <svg width="8" height="9"><path d="M0 1.500h8M0 3.500h8M0 5.500h8M0 7.500h8" stroke="#868e9b" /></svg>
            </VThumb>
            <Slot $w={17} $mt={472}><Down w={9} c="#4e535a" /></Slot>
            <NavBlock>
              <svg width="6" height="7" viewBox="0 0 6 7"><path d="M0 3h6L3 0zM0 7h6L3 4z" fill="#4e535a" /></svg>
              <svg width="8" height="8"><circle cx="4" cy="4" r="3" fill="none" stroke="#666b72" strokeWidth="1.300" /></svg>
              <svg width="6" height="7" viewBox="0 0 6 7"><path d="M0 0h6L3 3zM0 4h6L3 7z" fill="#4e535a" /></svg>
            </NavBlock>
          </VScroll>
        </Work>

        <HScroll>
          <HArrow $w={17}><svg width="5" height="9"><path d="M5 0v9L0 4.500z" fill="#4e535a" /></svg></HArrow>
          <HThumb><svg width="8" height="8"><path d="M.5 0v8M2.500 0v8M4.500 0v8M6.500 0v8" stroke="#868e9b" /></svg></HThumb>
          <HArrow $w={49} $end><svg width="5" height="9"><path d="M0 0v9l5-4.500z" fill="#4e535a" /></svg></HArrow>
        </HScroll>

        <StatusBar>
          <Fit w={106}>Страница: 22 из 142</Fit>
          <StatusSep $ml={9} />
          <Slot $w={98} $ml={8}><Fit w={98}>Число слов: 24 466</Fit></Slot>
          <StatusSep $ml={9} />
          <Slot $w={17} $ml={7}><SpellBook /></Slot>
          <Slot $w={42} $ml={16}><Fit w={42}>русский</Fit></Slot>
          <StatusSep $ml={9} />
          <StatusSep $ml={986} />
          <ViewOn><svg width="13" height="13"><path d="M.5.5h12v12H.5z" fill="#fff" stroke="#5d6269" /><path d="M2 3.500h9M2 5.500h9M2 7.500h9M2 9.500h9" stroke="#5d6269" /></svg></ViewOn>
          <Slot $w={12} $ml={4}>
            <svg width="12" height="12"><path d="M6 2L4.500.7H.6v9H4.500L6 11l1.500-1.300h3.900v-9H7.500zV11M2 3h2.500M2 5h2.500M2 7h2.500M7.500 3H10M7.500 5H10M7.500 7H10" fill="#f5f5f5" stroke="#5d6269" /></svg>
          </Slot>
          <Slot $w={12} $ml={5}>
            <svg width="13" height="12"><path d="M.5.5h9v9h-9z" fill="#f5f5f5" stroke="#5d6269" /><path d="M2 3h6M2 5h6M2 7h4" stroke="#5d6269" /><circle cx="9" cy="8.500" r="3" fill="#2f79a8" /><path d="M8 7l2.500 1-1 2z" fill="#58b05a" /></svg>
          </Slot>
          <Slot $w={10} $ml={8}>
            <svg width="10" height="10"><path d="M0 .5h6M3 3h7M3 5h7M5 7.500h5M3 9.500h7" stroke="#6c7178" /></svg>
          </Slot>
          <Slot $w={10} $ml={8}>
            <svg width="10" height="10"><path d="M0 .5h10M0 2.700h10M0 5h10M0 7.200h10M0 9.400h10" stroke="#6c7178" /></svg>
          </Slot>
          <Slot $w={27} $ml={14}><Fit w={27}>189%</Fit></Slot>
          <Slot $w={132} $ml={8}>
            <svg width="132" height="18" viewBox="0 0 132 18">
              <path d="M16 9h102M65.500 5v8" stroke="#7d838b" /><path d="M16 10h102" stroke="#eceef0" />
              <g fill="#f3f4f6" stroke="#6c7178"><circle cx="8.500" cy="9" r="7.500" /><circle cx="124" cy="9" r="7.500" /><path d="M72.500 3.500h8v7l-4 4-4-4z" fill="#fff" /></g>
              <path d="M5 9h7M120 9h8M124 5v8" stroke="#3a3e44" strokeWidth="2" />
            </svg>
          </Slot>
        </StatusBar>
        <Tooltip><Fit w={117}>Представление задач</Fit></Tooltip>

        <Taskbar>
          <TaskTile $w={48}>
            <svg width="17" height="16" viewBox="0 0 17 16"><path d="M0 2.300L7 1.300v6.200H0zM8 1.200L17 0v7.500H8zM0 8.500h7v6.200L0 13.700zM8 8.500h9V16l-9-1.200z" fill="#000" /></svg>
          </TaskTile>
          <Search>
            <svg width="17" height="18" viewBox="0 0 17 18"><circle cx="10.500" cy="6.500" r="5.500" {...stroke} /><path d="M6.500 10.500L.7 17" {...stroke} /></svg>
            <Fit w={217} $size={14.5}>Введите здесь текст для поиска</Fit>
          </Search>
          <TaskTile $w={49} $pl={1}><svg width="17" height="17"><circle cx="8.500" cy="8.500" r="6.800" fill="none" stroke="#000" strokeWidth="2" /></svg></TaskTile>
          <TaskTile $w={48} $bg="#e6e6e6">
            <svg width="17" height="16"><path d="M.6 1h10v5.500H.6zM.6 9h10v5.500H.6zM14.500.5v5.500M14.500 12.500V15" {...stroke} /><rect x="13" y="8" width="3" height="3" fill="#000" /></svg>
          </TaskTile>
          <TaskTile $w={52} $pl={2}><Opera /></TaskTile>
          <TaskTile $w={44} $pl={2} $bg="#f0f0f0" $open><WordDoc /></TaskTile>
          <TileEdge />
          <TaskTile $w={40} $ml={5} $open><Folder /></TaskTile>
          <Toolbar>
            <Fit w={76}>Рабочий стол</Fit>
            <MoreMark>»</MoreMark>
          </Toolbar>
          <Tray>
            <Slot $w={23} $ml={68}><Cloud /></Slot>
            <Slot $w={28} $ml={8} $mt={1}><Fit w={28} $size={14}>27°F</Fit></Slot>
            <Slot $w={57} $ml={8} $mt={1}><Fit w={57} $size={13.5}>Облачно</Fit></Slot>
            <Slot $w={13} $ml={17}><svg width="13" height="8"><path d="M.7 7l5.800-6 5.800 6" {...stroke} strokeWidth="1.500" /></svg></Slot>
            <Slot $w={12} $ml={12}><Meet /></Slot>
            <Slot $w={17} $ml={9}><SyncIcon /></Slot>
            <Slot $w={16} $ml={8}><Battery /></Slot>
            <Slot $w={14} $ml={10}><Wifi /></Slot>
            <Slot $w={16} $ml={8}><Volume /></Slot>
            <Slot $w={23} $ml={9}><Fit w={23}>ENG</Fit></Slot>
            <Clock><Fit w={27}>12:39</Fit><Fit w={54}>17.12.2021</Fit></Clock>
            <Slot $w={17} $ml={15}><svg width="17" height="16"><path d="M.7.700h15.500v11.500h-5l-2.700 2.700-2.700-2.700H.7z" {...stroke} /></svg></Slot>
          </Tray>
          <PeekLine />
        </Taskbar>
      </Window>
    </>
  );
}
